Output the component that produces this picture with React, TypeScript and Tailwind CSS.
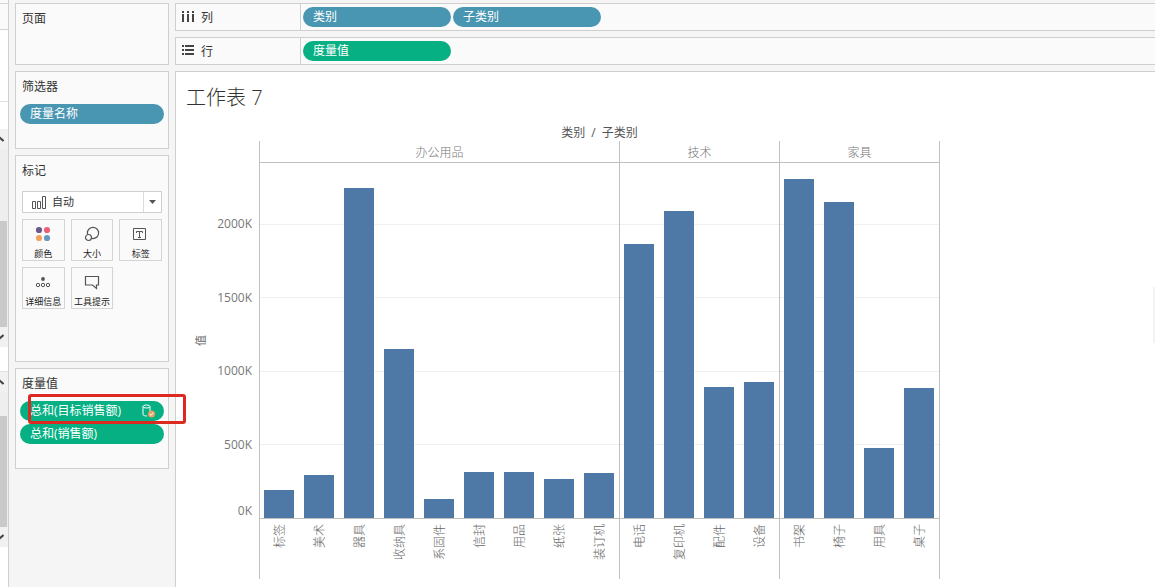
import React from "react";

type Bar = { name: string; value: number };
type Group = { name: string; bars: Bar[] };

const AXIS_MAX = 2412;

const groups: Group[] = [
  {
    name: "办公用品",
    bars: [
      { name: "标签", value: 190 },
      { name: "美术", value: 292 },
      { name: "器具", value: 2242 },
      { name: "收纳具", value: 1148 },
      { name: "系固件", value: 129 },
      { name: "信封", value: 313 },
      { name: "用品", value: 313 },
      { name: "纸张", value: 265 },
      { name: "装订机", value: 306 },
    ],
  },
  {
    name: "技术",
    bars: [
      { name: "电话", value: 1862 },
      { name: "复印机", value: 2086 },
      { name: "配件", value: 890 },
      { name: "设备", value: 924 },
    ],
  },
  {
    name: "家具",
    bars: [
      { name: "书架", value: 2303 },
      { name: "椅子", value: 2147 },
      { name: "用具", value: 476 },
      { name: "桌子", value: 883 },
    ],
  },
];

const ticks = [500, 1000, 1500, 2000];

const percent = (value: number) => `${(value / AXIS_MAX) * 100}%`;

function Panel({ title, className, children }: { title: string; className: string; children?: React.ReactNode }) {
  return (
    <section className={`border border-[#cfcfcf] bg-[#fafafa] px-1 ${className}`}>
      <h2 className="h-7 pl-0.5 text-xs leading-[30px] text-[#333]">{title}</h2>
      {children}
    </section>
  );
}

function Pill({ label, className, children }: { label: string; className: string; children?: React.ReactNode }) {
  return (
    <button
      type="button"
      className={`flex h-5 items-center justify-between rounded-full px-2.5 text-xs leading-5 text-white ${className}`}
    >
      <span>{label}</span>
      {children}
    </button>
  );
}

function Shelf({ label, icon, children }: { label: string; icon: React.ReactNode; children: React.ReactNode }) {
  return (
    <div className="flex h-7 border-y border-l border-[#cfcfcf] bg-[#fafafa]">
      <div className="flex w-[125px] shrink-0 items-center gap-[7px] border-r border-[#cfcfcf] pl-1.5 text-xs text-[#333]">
        {icon}
        <span className="pt-0.5">{label}</span>
      </div>
      <div className="flex items-center gap-0.5 pl-0.5">{children}</div>
    </div>
  );
}

function ColumnsIcon() {
  return (
    <svg width="12" height="12" viewBox="0 0 12 12" fill="#444">
      <path d="M0 0h2v2H0zM5 0h2v2H5zM10 0h2v2h-2zM0 3h2v8H0zM5 3h2v8H5zM10 3h2v8h-2z" />
    </svg>
  );
}

function RowsIcon() {
  return (
    <svg width="12" height="12" viewBox="0 0 12 12" fill="#444">
      <path d="M0 0h2v2H0zM0 4h2v2H0zM0 8h2v2H0zM3 0h9v2H3zM3 4h9v2H3zM3 8h9v2H3z" />
    </svg>
  );
}

function BarsIcon() {
  return (
    <svg width="14" height="13" viewBox="0 0 14 13" fill="none" stroke="#555">
      <path d="M.5 5.5h3v7h-3zM5.500 5.500h3v7h-3zM10.500 .5h3v12h-3z" />
    </svg>
  );
}

function ColorIcon() {
  return (
    <svg width="16" height="16" viewBox="0 0 16 16">
      <circle cx="4" cy="4" r="3.100" fill="#68588c" />
      <circle cx="12" cy="4" r="3.100" fill="#ec5f78" />
      <circle cx="4" cy="12" r="3.100" fill="#f0a35e" />
      <circle cx="12" cy="12" r="3.100" fill="#6699c2" />
    </svg>
  );
}

function SizeIcon() {
  return (
    <svg width="16" height="16" viewBox="0 0 16 16" fill="none" stroke="#555" strokeWidth="1.200">
      <circle cx="9" cy="7" r="5.600" />
      <circle cx="4.500" cy="11.500" r="3" fill="#fafafa" />
    </svg>
  );
}

function LabelIcon() {
  return (
    <svg width="16" height="16" viewBox="0 0 16 16" fill="none" stroke="#555">
      <path d="M.5 2.500h12v11H.5z" />
      <path d="M3.500 7V5.500h6V7M6.500 5.500v6M5 11.500h3" />
    </svg>
  );
}

function DetailIcon() {
  return (
    <svg width="16" height="16" viewBox="0 0 16 16" fill="none" stroke="#555">
      <circle cx="8" cy="5" r="1.900" fill="#555" stroke="none" />
      <circle cx="3" cy="11" r="1.700" />
      <circle cx="8" cy="11" r="1.700" />
      <circle cx="13" cy="11" r="1.700" />
    </svg>
  );
}

function TooltipIcon() {
  return (
    <svg width="16" height="16" viewBox="0 0 16 16" fill="none" stroke="#555" strokeWidth="1.200">
      <path d="M1.500 2.500h13v8.500h-2v3.500l-4-3.500h-7z" />
    </svg>
  );
}

function DatasourceIcon() {
  return (
    <svg className="-mr-0.5" width="15" height="14" viewBox="0 0 15 14" fill="none">
      <path d="M2 2.500v8c0 1 2 1.500 4 1.500M9 7V2.500" stroke="#fff" />
      <ellipse cx="5.500" cy="2.500" rx="3.500" ry="1.500" stroke="#fff" />
      <circle cx="10.500" cy="10" r="3.500" fill="#e8a266" />
      <path d="M8.800 10l1.300 1.300 2.200-2.600" stroke="#fff" />
    </svg>
  );
}

const markButtons = [
  { label: "颜色", icon: <ColorIcon /> },
  { label: "大小", icon: <SizeIcon /> },
  { label: "标签", icon: <LabelIcon /> },
  { label: "详细信息", icon: <DetailIcon /> },
  { label: "工具提示", icon: <TooltipIcon /> },
];

function ScrollArrow({ down = false }: { down?: boolean }) {
  return (
    <span className="flex h-5 items-center bg-[#f1f1f1]">
      <svg width="4" height="6" viewBox="0 0 4 6" fill="none" stroke="#444" strokeWidth="2">
        <path d={down ? "M-1 5 3.500 1" : "M-1 1 3.500 5"} />
      </svg>
    </span>
  );
}

function ScrollEdge() {
  return (
    <div className="flex w-[9px] shrink-0 flex-col border-r border-[#cfcfcf] bg-white">
      <div className="h-[30px] border-b border-[#d4d4d4] bg-[#fafafa] pt-[3px]">
        <div className="border-t border-[#d4d4d4]" />
      </div>
      <div className="h-[72px] border-b border-[#e2e2e2]" />
      <div className="mt-[27px] bg-[#eee]">
        <ScrollArrow />
        <div className="mt-[72px] mr-px h-[106px] bg-[#c9c9c9]" />
        <ScrollArrow down />
      </div>
      <div className="mt-6 border-t border-[#e2e2e2] bg-[#eee]">
        <ScrollArrow />
        <div className="mt-6 mr-px h-[111px] bg-[#c9c9c9]" />
        <ScrollArrow down />
      </div>
    </div>
  );
}

function Chart() {
  return (
    <div className="flex">
      <div className="flex w-[83px] shrink-0 pt-[22px] text-xs text-[#666]">
        <div className="flex h-[355px] w-[50px] items-center justify-center">
          <span className="rotate-180 text-[11px] [text-orientation:sideways] [writing-mode:vertical-rl]">值</span>
        </div>
        <div className="relative h-[356px] flex-1">
          {ticks.map((tick) => (
            <span
              key={tick}
              className="absolute right-[7px] translate-y-1/2 leading-4 text-[#777]"
              style={{ bottom: percent(tick) }}
            >
              {tick}K
            </span>
          ))}
          <span className="absolute right-[7px] bottom-0 leading-4 text-[#777]">0K</span>
        </div>
      </div>
      <div className="flex border-l border-[#c0c0c0]">
        {groups.map((group) => (
          <div key={group.name} className="border-r border-[#c0c0c0]">
            <div className="h-[22px] border-b border-[#c0c0c0] text-center text-xs leading-6 font-light text-[#777]">
              {group.name}
            </div>
            <div className="relative flex h-[355px]">
              {ticks.map((tick) => (
                <div
                  key={tick}
                  className="absolute inset-x-0 translate-y-px border-t border-[#f0f0f0]"
                  style={{ bottom: percent(tick) }}
                />
              ))}
              {group.bars.map((bar) => (
                <div key={bar.name} className="relative flex w-10 items-end pl-1 last:w-[39px]">
                  <div className="w-[30px] bg-[#4e79a7]" style={{ height: percent(bar.value) }} />
                </div>
              ))}
            </div>
            <div className="flex h-[61px] border-t border-[#c0c0c0] pt-[5px]">
              {group.bars.map((bar) => (
                <div key={bar.name} className="flex w-10 items-start justify-center last:w-[39px]">
                  <span className="rotate-180 text-xs leading-4 font-light text-[#666] [text-orientation:sideways] [writing-mode:vertical-rl]">
                    {bar.name}
                  </span>
                </div>
              ))}
            </div>
          </div>
        ))}
      </div>
    </div>
  );
}

export default function App() {
  return (
    <div className="flex min-h-screen overflow-hidden bg-[#f5f5f5] font-['Open_Sans','Noto_Sans_CJK_SC',sans-serif]">
      <ScrollEdge />

      <aside className="flex w-[166px] shrink-0 flex-col gap-1.5 px-1.5 pt-[3px]">
        <Panel title="页面" className="h-[62px]" />

        <Panel title="筛选器" className="h-[78px]">
          <Pill label="度量名称" className="mt-1 w-full bg-[#4996b2]" />
        </Panel>

        <Panel title="标记" className="h-[207px]">
          <div className="mx-0.5 mt-[7px] flex h-[22px] items-center border border-[#cfcfcf] bg-white pl-[9px]">
            <BarsIcon />
            <select
              aria-label="标记"
              className="h-full min-w-0 flex-1 appearance-none bg-transparent pl-1.5 text-[11px] text-[#333] outline-none"
            >
              <option>自动</option>
            </select>
            <span className="pointer-events-none flex h-full w-[18px] items-center justify-center border-l border-[#dcdcdc]">
              <svg width="7" height="4" viewBox="0 0 7 4" fill="#555">
                <path d="M0 0h7L3.500 4z" />
              </svg>
            </span>
          </div>
          <div className="mx-0.5 mt-1.5 grid grid-cols-3 gap-1.5">
            {markButtons.map(({ label, icon }) => (
              <button
                key={label}
                type="button"
                className="flex h-[42px] flex-col items-center justify-between border border-[#d4d4d4] pt-1.5 text-[9px] leading-3 whitespace-nowrap text-[#222]"
              >
                {icon}
                <span>{label}</span>
              </button>
            ))}
          </div>
        </Panel>

        <Panel title="度量值" className="h-[101px]">
          <div className="relative mt-1 flex flex-col gap-[3px]">
            <Pill label="总和(目标销售额)" className="w-full bg-[#06b083]">
              <DatasourceIcon />
            </Pill>
            <Pill label="总和(销售额)" className="w-full bg-[#06b083]" />
            <div className="pointer-events-none absolute -top-[7px] left-2 z-10 h-[30px] w-[158px] rounded-[3px] border-3 border-[#dc2a20]" />
          </div>
        </Panel>
      </aside>

      <main className="flex min-w-0 flex-1 flex-col gap-1.5 pt-[3px]">
        <Shelf label="列" icon={<ColumnsIcon />}>
          <Pill label="类别" className="w-[148px] bg-[#4996b2]" />
          <Pill label="子类别" className="w-[148px] bg-[#4996b2]" />
        </Shelf>
        <Shelf label="行" icon={<RowsIcon />}>
          <Pill label="度量值" className="w-[148px] bg-[#06b083]" />
        </Shelf>

        <div className="flex flex-1 border-t border-l border-[#cfcfcf] bg-white">
          <div className="flex-1">
            <h1 className="pt-2.5 pl-2.5 text-xl leading-8 font-light text-[#333]">工作表 7</h1>
            <div className="w-fit">
              <div className="mt-2 ml-[83px] flex h-[19px] justify-center gap-1.5 text-xs leading-[22px] text-[#555]">
                <span>类别</span>
                <span>/</span>
                <span>子类别</span>
              </div>
              <Chart />
            </div>
          </div>
          <div className="mb-[30px] h-14 w-0.5 self-center bg-[#f3f3f3]" />
        </div>
      </main>
    </div>
  );
}
